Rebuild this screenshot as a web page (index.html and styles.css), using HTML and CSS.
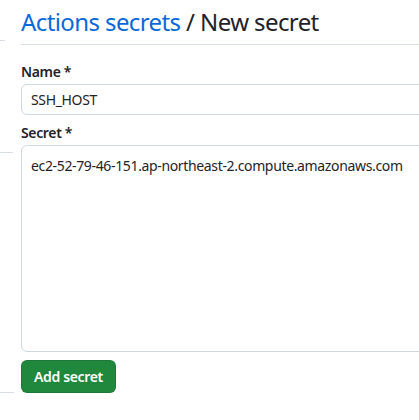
FILE: index.html
```html
<!DOCTYPE html>
<html>
<head>
<meta charset="utf-8">
<link rel="stylesheet" href="styles.css">
</head>
<body>
<div class="page">
  <div class="side">
    <div class="seg seg1"></div>
    <div class="seg seg2"></div>
    <div class="seg seg3"></div>
  </div>
  <main class="main">
    <h1 class="title"><a class="crumb" href="#">Actions secrets</a> / New secret</h1>
    <form class="form">
      <label class="label" for="name">Name *</label>
      <input class="input" id="name" type="text" value="SSH_HOST">
      <label class="label label-secret" for="secret">Secret *</label>
      <textarea class="textarea" id="secret">ec2-52-79-46-151.ap-northeast-2.compute.amazonaws.com</textarea>
      <button class="btn" type="button">Add secret</button>
    </form>
  </main>
</div>
</body>
</html>
```
FILE: styles.css
```css
html, body {
  margin: 0;
  padding: 0;
  background: #ffffff;
  overflow: hidden;
}
body {
  font-family: "Segoe UI", "Noto Sans", "Liberation Sans", sans-serif;
  color: #1f2328;
  width: 419px;
  height: 420px;
  letter-spacing: -0.35px;
}
.page {
  display: flex;
  width: 600px;
}
.side {
  width: 21px;
  flex: none;
  display: flex;
  flex-direction: column;
}
.seg {
  border-bottom: 1px solid #d8dee4;
}
.seg1 { height: 40px; width: 5px; }
.seg2 { height: 111px; width: 13px; }
.seg3 { height: 239px; width: 14px; }
.main {
  width: 560px;
  flex: none;
}
.title {
  margin: 0;
  padding-top: 5px;
  padding-bottom: 5px;
  font-size: 24px;
  font-weight: 400;
  line-height: 34px;
  letter-spacing: -0.6px;
  border-bottom: 1px solid #d8dee4;
}
.crumb {
  color: #0969da;
  text-decoration: none;
}
.form {
  display: flex;
  flex-direction: column;
  align-items: flex-start;
  padding-top: 17px;
}
.label {
  font-size: 14px;
  font-weight: 600;
  line-height: 20px;
  margin-bottom: 2px;
}
.label-secret {
  margin-top: 8px;
}
.input, .textarea {
  box-sizing: border-box;
  width: 100%;
  border: 1px solid #d0d7de;
  border-radius: 6px;
  font-family: inherit;
  font-size: 14px;
  letter-spacing: -0.35px;
  color: #1f2328;
  padding: 5px 9px;
  line-height: 20px;
  background: #ffffff;
  outline: none;
}
.input {
  height: 31px;
}
.textarea {
  height: 207px;
  padding-top: 10px;
  resize: none;
  display: block;
}
.btn {
  margin-top: 8px;
  height: 33px;
  padding: 0 12px;
  border: 1px solid rgba(31,35,40,0.15);
  border-radius: 6px;
  background: #1f883d;
  color: #ffffff;
  font-family: inherit;
  font-size: 14px;
  font-weight: 600;
  letter-spacing: -0.35px;
}
```
